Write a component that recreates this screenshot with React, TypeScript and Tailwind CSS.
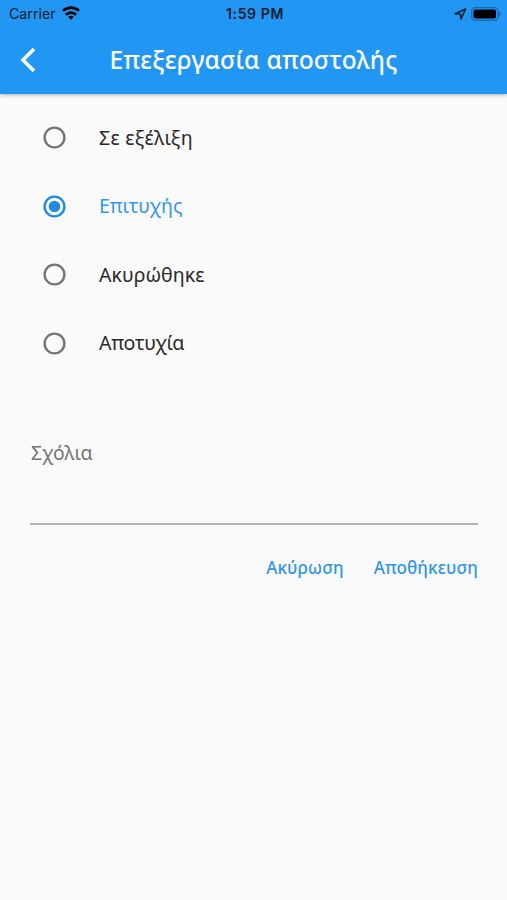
import { useState } from 'react';
import clsx from 'clsx';

const statuses = [
  { label: 'Σε εξέλιξη', tracking: 'tracking-[0.25px]' },
  { label: 'Επιτυχής', tracking: 'tracking-[-0.05px]' },
  { label: 'Ακυρώθηκε', tracking: 'tracking-normal' },
  { label: 'Αποτυχία', tracking: 'tracking-[-0.3px]' },
];

export default function App() {
  const [status, setStatus] = useState('Επιτυχής');

  return (
    <div className="flex h-[900px] w-[507px] flex-col overflow-hidden bg-[#fafafa] font-['Noto_Sans',sans-serif]">
      <header className="h-[94px] shrink-0 bg-[#2196f3] shadow-[0_1px_4px_rgba(0,0,0,0.3)]">
        <StatusBar />
        <div className="grid h-[66px] grid-cols-[56px_1fr_56px] items-center">
          <button className="flex h-full items-center pl-[20px]" aria-label="Πίσω">
            <BackIcon />
          </button>
          <h1 className="text-center text-[24.5px] leading-none font-medium tracking-[0.27px] whitespace-nowrap text-white">
            Επεξεργασία αποστολής
          </h1>
        </div>
      </header>

      <main>
        {/* Status options */}
        <div className="pt-[9.5px]">
          {statuses.map((item) => (
            <StatusOption
              key={item.label}
              label={item.label}
              tracking={item.tracking}
              selected={item.label === status}
              onSelect={() => setStatus(item.label)}
            />
          ))}
        </div>

        {/* Comments */}
        <div className="mr-[29px] ml-[30px] mt-[61.5px] h-[86px] border-b-2 border-[#b4b4b4]">
          <p className="pl-px text-[19.4px] leading-[28px] text-[#757575]">Σχόλια</p>
        </div>

        {/* Actions */}
        <div className="mt-[31px] flex justify-end gap-[30px] pr-[29px] text-[17.1px] leading-[24px] font-medium tracking-[0.1px] text-[#3296e6]">
          <button>Ακύρωση</button>
          <button>Αποθήκευση</button>
        </div>
      </main>
    </div>
  );
}

function StatusBar() {
  return (
    <div className="grid h-[27px] grid-cols-3 items-center pr-[6px] pl-[9px] font-['Inter',sans-serif] text-[#071c30]">
      <div className="flex items-center gap-[6px]">
        <span className="pt-px text-[14.2px] leading-none">Carrier</span>
        <WifiIcon />
      </div>
      <span className="text-center text-[14px] leading-none font-semibold tracking-[0.6px]">1:59 PM</span>
      <div className="flex items-center justify-end gap-[4px]">
        <LocationIcon />
        <BatteryIcon />
      </div>
    </div>
  );
}

interface StatusOptionProps {
  label: string;
  tracking: string;
  selected: boolean;
  onSelect: () => void;
}

function StatusOption({ label, tracking, selected, onSelect }: StatusOptionProps) {
  return (
    <button
      role="radio"
      aria-checked={selected}
      onClick={onSelect}
      className="flex h-[68.5px] w-full items-center pl-[43px]"
    >
      <RadioIcon selected={selected} />
      <span
        className={clsx(
          'ml-[33px] text-[19.6px] leading-none',
          tracking,
          selected ? 'text-[#3499ea]' : 'text-[#2b2b2b]'
        )}
      >
        {label}
      </span>
    </button>
  );
}

function RadioIcon({ selected }: { selected: boolean }) {
  return (
    <svg
      width="23"
      height="23"
      viewBox="0 0 23 23"
      className={selected ? 'text-[#2089e2]' : 'text-[#757575]'}
    >
      <circle cx="11.5" cy="11.5" r="9.9" fill="none" stroke="currentColor" strokeWidth="2.4" />
      {selected && <circle cx="11.5" cy="11.5" r="5.8" fill="currentColor" />}
    </svg>
  );
}

function BackIcon() {
  return (
    <svg width="16" height="26" viewBox="0 0 16 26" fill="none" stroke="white" strokeWidth="3.6">
      <path d="M14 2 3 13l11 11" />
    </svg>
  );
}

function WifiIcon() {
  return (
    <svg width="18" height="14" viewBox="0 0 18 14" fill="none" stroke="#000" strokeWidth="2.7">
      <path d="M1 4.9a11.4 11.4 0 0 1 16 0" />
      <path d="M3.9 8.7a7.2 7.2 0 0 1 10.2 0" />
      <path d="M9 13.8 6.3 11.1a3.8 3.8 0 0 1 5.4 0z" fill="#000" stroke="none" />
    </svg>
  );
}

function LocationIcon() {
  return (
    <svg width="13" height="12" viewBox="0 0 13 12" fill="none" stroke="#05192b" strokeWidth="1.5" strokeLinejoin="round">
      <path d="M11.6 1 1.2 5.8l5.2.4.6 4.8z" />
    </svg>
  );
}

function BatteryIcon() {
  return (
    <svg width="30" height="14" viewBox="0 0 30 14">
      <rect x="0.6" y="0.6" width="26.4" height="12.8" rx="3.6" fill="none" stroke="#1668ad" strokeWidth="1.2" />
      <rect x="2.4" y="2.4" width="22.6" height="9.2" rx="2" fill="#000" />
      <path d="M28 4.8c2 .8 2 3.6 0 4.4z" fill="#1668ad" />
    </svg>
  );
}
